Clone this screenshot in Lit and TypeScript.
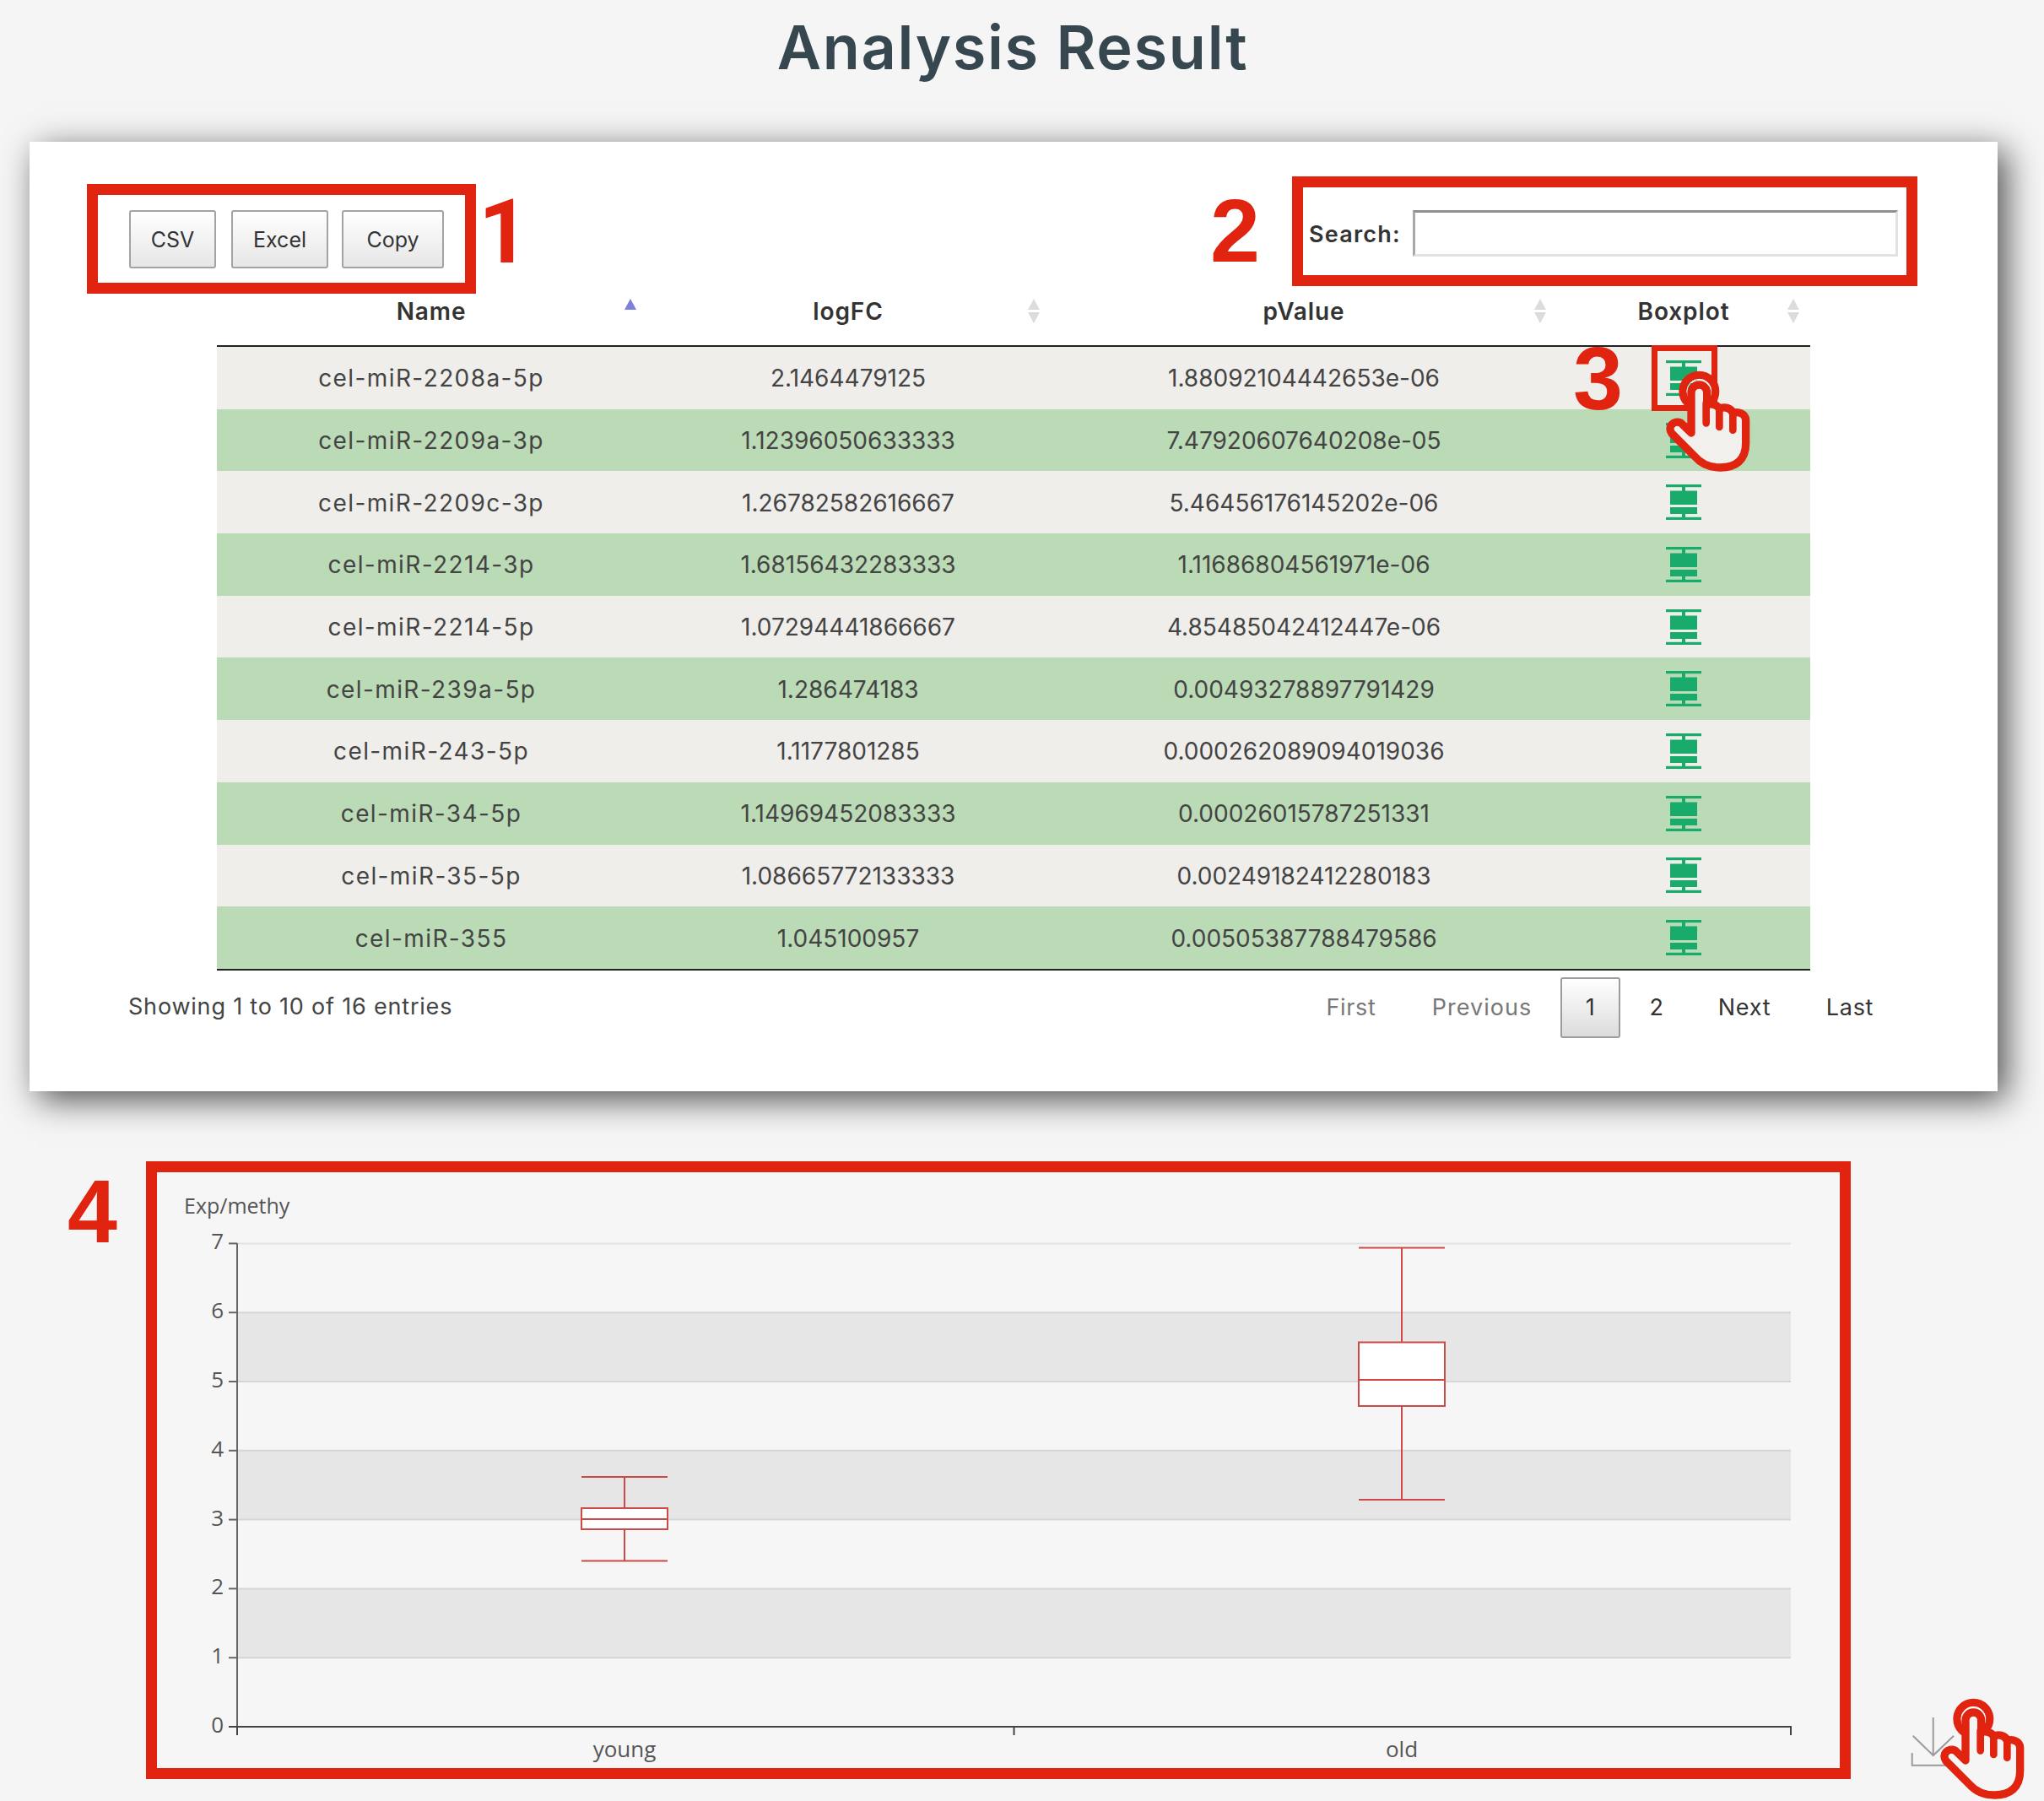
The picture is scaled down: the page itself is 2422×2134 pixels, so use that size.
import { LitElement, html, css, svg } from "lit";
import { customElement } from "lit/decorators.js";

const ROWS = [
  ["cel-miR-2208a-5p", "2.1464479125", "1.88092104442653e-06"],
  ["cel-miR-2209a-3p", "1.12396050633333", "7.47920607640208e-05"],
  ["cel-miR-2209c-3p", "1.26782582616667", "5.46456176145202e-06"],
  ["cel-miR-2214-3p", "1.68156432283333", "1.11686804561971e-06"],
  ["cel-miR-2214-5p", "1.07294441866667", "4.85485042412447e-06"],
  ["cel-miR-239a-5p", "1.286474183", "0.00493278897791429"],
  ["cel-miR-243-5p", "1.1177801285", "0.000262089094019036"],
  ["cel-miR-34-5p", "1.14969452083333", "0.00026015787251331"],
  ["cel-miR-35-5p", "1.08665772133333", "0.00249182412280183"],
  ["cel-miR-355", "1.045100957", "0.00505387788479586"],
];

const boxIcon = html`<svg class="boxicon" viewBox="0 0 42 42" aria-hidden="true">
  <rect x="0" y="0" width="42" height="3.2" />
  <rect x="19" y="3" width="4" height="5" />
  <rect x="5" y="7.5" width="32" height="16.5" />
  <rect x="5" y="27" width="32" height="8" />
  <rect x="19" y="35" width="4" height="4" />
  <rect x="0" y="38.8" width="42" height="3.2" />
</svg>`;

const sortIcon = (active = false) => html`<svg class="sort ${active ? "sort-on" : ""}" viewBox="0 0 16 30" aria-hidden="true">
  <path class=${active ? "up-on" : "off"} d="M8 0 L15 13 L1 13 Z" />
  ${active ? "" : svg`<path class="off" d="M1 16 L15 16 L8 29 Z" />`}
</svg>`;

const hand = (cls: string) => html`<svg class="hand ${cls}" viewBox="270 140 320 370" aria-hidden="true">
  <circle cx="400" cy="220" r="58" fill="none" stroke="#e0240f" stroke-width="28" />
  <circle cx="400" cy="220" r="43" fill="none" stroke="#fff" stroke-width="3" />
  <path class="palm" d="M372 368 L372 225 A28 28 0 0 1 428 225 L428 268 C445 262 465 268 472 282 C490 272 515 280 520 298 C540 290 565 300 566 322 L566 405 C566 465 530 491 475 491 C435 491 405 475 385 452 L303 370 C285 345 310 322 335 332 Z" />
  <path class="sep" d="M425 262 L425 333 M472 282 L472 347 M520 298 L520 358" />
</svg>`;

@customElement("app-root")
export class AppRoot extends LitElement {
  static styles = css`
    :host {
      display: block;
      position: relative;
      width: 2422px;
      height: 2134px;
      overflow: hidden;
      background: #f5f5f5;
      color: #444;
      font-family: Inter, "Noto Sans", sans-serif;
    }
    h1 {
      margin: 0;
      height: 168px;
      padding: 12px 22px 0 0;
      box-sizing: border-box;
      text-align: center;
      font-size: 72px;
      line-height: 88px;
      font-weight: 600;
      color: #37474f;
      letter-spacing: 1.7px;
    }
    .card {
      margin-left: 35px;
      width: 2332px;
      height: 1125px;
      background: #fff;
      box-shadow: 10px 10px 38px rgba(0, 0, 0, 0.68);
    }
    .toolbar {
      display: flex;
      align-items: flex-start;
      height: 178px;
      padding: 0 95px 0 68px;
      box-sizing: border-box;
    }
    .redbox {
      border: 13px solid #e0240f;
      box-sizing: border-box;
    }
    .buttons {
      display: flex;
      align-items: center;
      margin-top: 50px;
      width: 461px;
      height: 130px;
      padding: 0 0 0 37px;
    }
    .btn {
      display: flex;
      align-items: center;
      justify-content: center;
      box-sizing: border-box;
      height: 69px;
      padding-top: 2px;
      border: 2px solid #a3a3a3;
      border-radius: 3px;
      background: linear-gradient(#fff, #e6e6e6);
      font-size: 25px;
      color: #333;
    }
    .b-csv { width: 103px; margin-right: 18px; }
    .b-excel { width: 115px; margin-right: 16px; }
    .b-copy { width: 121px; }
    .num {
      font-family: "Liberation Sans", Arial, sans-serif;
      font-weight: 700;
      font-size: 106px;
      line-height: 76px;
      color: #e0240f;
    }
    .n1 {
      margin: 70px 0 0 3px;
      font-family: Roboto, "Liberation Sans", sans-serif;
      font-size: 105px;
    }
    .n2 { margin: 67px 38px 0 auto; }
    .search {
      display: flex;
      align-items: center;
      margin-top: 41px;
      width: 741px;
      height: 130px;
      padding: 4px 10px 0 7px;
      gap: 14px;
    }
    .search label {
      font-size: 27px;
      font-weight: 600;
      color: #333;
      width: 109px;
      margin-top: 3px;
      letter-spacing: 1.2px;
      white-space: nowrap;
    }
    .search .input {
      flex: 1;
      height: 55px;
      box-sizing: border-box;
      background: #fff;
      border: 3px solid;
      border-color: #8f8f8f #e2e2e2 #e2e2e2 #a8a8a8;
    }
    .table {
      margin-left: 222px;
      width: 1888px;
    }
    .row {
      display: grid;
      grid-template-columns: 508px 480px 600px 300px;
      height: 73.7px;
      align-items: center;
      text-align: center;
      font-size: 28px;
      background: #efeeeb;
    }
    .row.even { background: #bbdab6; }
    .name { letter-spacing: 1.4px; }
    .cell { padding-top: 1px; }
    .head {
      height: 65px;
      background: none;
      font-weight: 600;
      font-size: 28px;
      letter-spacing: 0.9px;
      color: #333;
      border-bottom: 2px solid #222;
      box-sizing: border-box;
    }
    .th {
      position: relative;
      height: 100%;
      display: flex;
      align-items: center;
      justify-content: center;
      padding-bottom: 18px;
      box-sizing: border-box;
    }
    .sort {
      position: absolute;
      right: 12px;
      top: 8px;
      width: 16px;
      height: 30px;
    }
    .sort-on { right: 10px; }
    .off { fill: #dcdcdc; }
    .up-on { fill: #7d7fdc; }
    .rows { border-bottom: 2px solid #222; }
    .boxicon {
      display: block;
      width: 42px;
      height: 42px;
      margin: 0 auto;
      fill: #19ab6c;
    }
    .footer {
      display: flex;
      align-items: center;
      height: 72px;
      margin-top: 8px;
      padding: 0 111px 0 117px;
      font-size: 27px;
      color: #444;
    }
    .info { margin: 0 auto 2px 0; letter-spacing: 0.8px; }
    .pg {
      display: flex;
      align-items: center;
      justify-content: center;
      height: 72px;
      box-sizing: border-box;
      color: #333;
      letter-spacing: 0.7px;
    }
    .pg.dis { color: #777; }
    .p-first { width: 124px; }
    .p-prev { width: 186px; letter-spacing: 1px; }
    .p-cur {
      width: 71px;
      border: 2px solid #9c9c9c;
      border-radius: 3px;
      background: linear-gradient(#fff, #dcdcdc);
    }
    .p-two { width: 86px; }
    .p-next { width: 122px; }
    .p-last { width: 128px; }
    .chartrow {
      display: flex;
      align-items: flex-start;
      margin-top: 83px;
      padding-left: 80px;
    }
    .n4 { margin: 21px 34px 0 0; }
    .chart {
      width: 2020px;
      height: 732px;
      background: #f6f6f6;
    }
    .chart svg { display: block; width: 1994px; height: 706px; }
    .chart text {
      font-family: "Open Sans", "Noto Sans", sans-serif;
      font-size: 25px;
      fill: #555;
    }
    .chart text.ytick { font-size: 26px; }
    .chart text.xlabel { font-size: 26px; }
    .dl {
      position: absolute;
      left: 2260px;
      top: 2030px;
      width: 60px;
      height: 66px;
    }
    .hl {
      position: absolute;
      left: 1957px;
      top: 409px;
      width: 78px;
      height: 78px;
      box-sizing: border-box;
      border: 7px solid #e0240f;
    }
    .n3 { position: absolute; left: 1864px; top: 410px; }
    .hand { position: absolute; width: 106.67px; height: 123.33px; }
    .hand-a { left: 1970px; top: 436.67px; }
    .hand-b { left: 2295px; top: 2010px; }
    .palm {
      stroke: #e0240f;
      stroke-width: 28;
      stroke-linejoin: round;
    }
    .hand-a .palm { fill: #f1f0ed; }
    .hand-b .palm { fill: #f5f5f5; }
    .sep {
      fill: none;
      stroke: #e0240f;
      stroke-width: 26;
      stroke-linecap: round;
    }
  `;

  private chart() {
    const y = (v: number) => 2046 - v * 81.8;
    const bands = [
      [6, 5],
      [4, 3],
      [2, 1],
    ];
    const boxes = [
      { cx: 740, hw: 51, hi: 1750, top: 1787, med: 1800, bot: 1812, lo: 1849.5 },
      { cx: 1661, hw: 51, hi: 1478.5, top: 1590.5, med: 1635, bot: 1666, lo: 1777 },
    ];
    return html`<svg viewBox="186 1389 1994 706" role="img">
      ${bands.map(
        ([a, b]) => svg`<rect x="281" y=${y(a)} width="1841" height=${y(b) - y(a)} fill="#e6e6e6" />`
      )}
      ${[7, 6, 5, 4, 3, 2, 1].map(
        (v) => svg`<line x1="281" x2="2122" y1=${y(v)} y2=${y(v)} stroke=${v === 7 ? "#e2e2e2" : "#d6d6d6"} stroke-width="2" />`
      )}
      ${[0, 1, 2, 3, 4, 5, 6, 7].map(
        (v) => svg`
          <line x1="271" x2="281" y1=${y(v)} y2=${y(v)} stroke="#666" stroke-width="2" />
          <text class="ytick" x="265" y=${y(v) + 7} text-anchor="end">${v}</text>`
      )}
      <line x1="281" x2="281" y1="1473" y2="2056" stroke="#666" stroke-width="2" />
      <line x1="271" x2="2123" y1="2046" y2="2046" stroke="#444" stroke-width="2" />
      ${[281, 1201.5, 2122].map(
        (x) => svg`<line x1=${x} x2=${x} y1="2046" y2="2056" stroke="#444" stroke-width="2" />`
      )}
      ${boxes.map(
        (b) => svg`<g stroke="#cb4a46" fill="none" stroke-width="2">
          <line x1=${b.cx} x2=${b.cx} y1=${b.hi} y2=${b.top} />
          <line x1=${b.cx} x2=${b.cx} y1=${b.bot} y2=${b.lo} />
          <line x1=${b.cx - b.hw} x2=${b.cx + b.hw} y1=${b.hi} y2=${b.hi} />
          <line x1=${b.cx - b.hw} x2=${b.cx + b.hw} y1=${b.lo} y2=${b.lo} />
          <rect x=${b.cx - b.hw} y=${b.top} width=${b.hw * 2} height=${b.bot - b.top} fill="#fff" />
          <line x1=${b.cx - b.hw} x2=${b.cx + b.hw} y1=${b.med} y2=${b.med} />
        </g>`
      )}
      <text x="218" y="1438">Exp/methy</text>
      <text class="xlabel" x="740" y="2082" text-anchor="middle">young</text>
      <text class="xlabel" x="1661" y="2082" text-anchor="middle">old</text>
    </svg>`;
  }

  render() {
    return html`
      <h1>Analysis Result</h1>
      <section class="card">
        <div class="toolbar">
          <div class="redbox buttons">
            <div class="btn b-csv">CSV</div>
            <div class="btn b-excel">Excel</div>
            <div class="btn b-copy">Copy</div>
          </div>
          <div class="num n1">1</div>
          <div class="num n2">2</div>
          <div class="redbox search">
            <label>Search:</label>
            <div class="input"></div>
          </div>
        </div>
        <div class="table">
          <div class="row head">
            <div class="th">Name${sortIcon(true)}</div>
            <div class="th">logFC${sortIcon()}</div>
            <div class="th">pValue${sortIcon()}</div>
            <div class="th">Boxplot${sortIcon()}</div>
          </div>
          <div class="rows">
            ${ROWS.map(
              (r, i) => html`<div class="row ${i % 2 ? "even" : ""}">
                <div class="cell name">${r[0]}</div>
                <div class="cell">${r[1]}</div>
                <div class="cell">${r[2]}</div>
                <div>${boxIcon}</div>
              </div>`
            )}
          </div>
        </div>
        <div class="footer">
          <div class="info">Showing 1 to 10 of 16 entries</div>
          <div class="pg dis p-first">First</div>
          <div class="pg dis p-prev">Previous</div>
          <div class="pg p-cur">1</div>
          <div class="pg p-two">2</div>
          <div class="pg p-next">Next</div>
          <div class="pg p-last">Last</div>
        </div>
      </section>
      <section class="chartrow">
        <div class="num n4">4</div>
        <div class="redbox chart">${this.chart()}</div>
      </section>
      <svg class="dl" viewBox="2260 2030 60 66" aria-hidden="true">
        <path d="M2290.7 2035 V2080 M2266.7 2056.7 L2290.7 2080 L2315 2056.7 M2265.7 2077 V2091.7 H2315" fill="none" stroke="#9a9a9a" stroke-width="2" />
      </svg>
      <div class="hl"></div>
      <div class="num n3">3</div>
      ${hand("hand-a")}
      ${hand("hand-b")}
    `;
  }
}
